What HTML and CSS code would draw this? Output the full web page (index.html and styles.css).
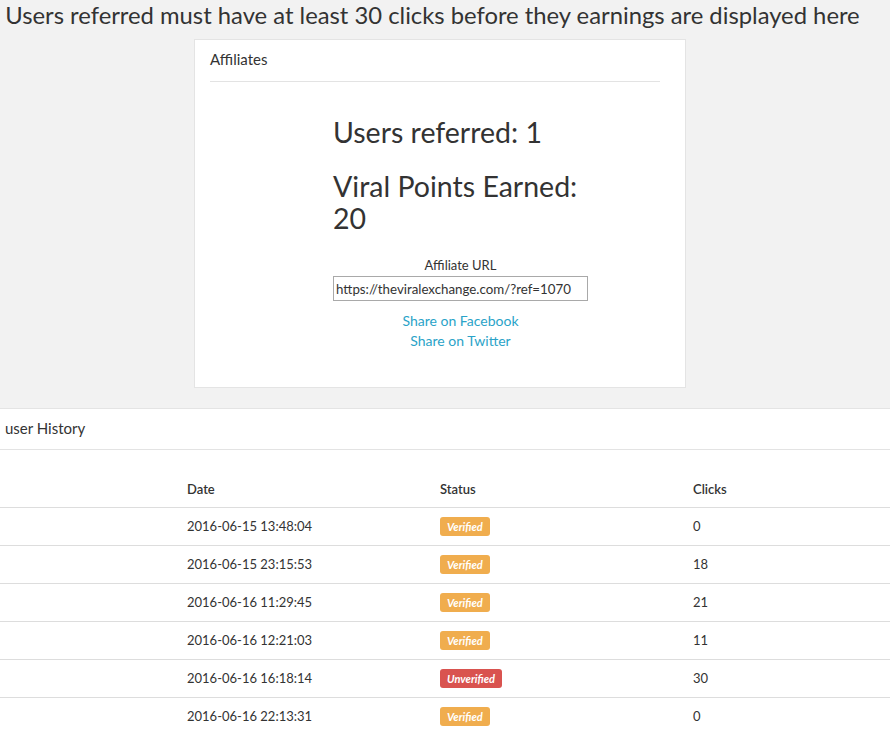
FILE: index.html
```html
<!DOCTYPE html>
<html lang="en">
<head>
  <meta charset="UTF-8" />
  <meta name="viewport" content="width=device-width, initial-scale=1.0" />
  <title>Affiliates</title>
  <link rel="stylesheet" href="styles.css">
</head>
<body>
  <h1 class="notice">Users referred must have at least 30 clicks before they earnings are displayed here</h1>

  <div class="panel affiliates">
    <div class="panel-heading">Affiliates</div>
    <div class="panel-body">
      <div class="stats">
        <h3>Users referred: 1</h3>
        <h3>Viral Points Earned: 20</h3>
        <div class="share">
          <label for="refUrl">Affiliate URL</label>
          <input type="text" id="refUrl" value="https://theviralexchange.com/?ref=1070" />
          <a href="#">Share on Facebook</a>
          <a href="#">Share on Twitter</a>
        </div>
      </div>
    </div>
  </div>

  <div class="panel history">
    <div class="panel-heading">user History</div>
    <table class="history-table">
      <thead>
        <tr>
          <th class="spacer"></th>
          <th class="col">Date</th>
          <th class="col">Status</th>
          <th>Clicks</th>
        </tr>
      </thead>
      <tbody>
        <tr><td></td><td>2016-06-15 13:48:04</td><td><span class="badge verified">Verified</span></td><td>0</td></tr>
        <tr><td></td><td>2016-06-15 23:15:53</td><td><span class="badge verified">Verified</span></td><td>18</td></tr>
        <tr><td></td><td>2016-06-16 11:29:45</td><td><span class="badge verified">Verified</span></td><td>21</td></tr>
        <tr><td></td><td>2016-06-16 12:21:03</td><td><span class="badge verified">Verified</span></td><td>11</td></tr>
        <tr><td></td><td>2016-06-16 16:18:14</td><td><span class="badge unverified">Unverified</span></td><td>30</td></tr>
        <tr><td></td><td>2016-06-16 22:13:31</td><td><span class="badge verified">Verified</span></td><td>0</td></tr>
      </tbody>
    </table>
  </div>
</body>
</html>
```

FILE: styles.css
```css
body {
  margin: 0;
  background: #f2f2f2;
  font-family: Lato, "Open Sans", sans-serif;
  color: #333;
}
.notice {
  margin: 0;
  font-size: 23.8px;
  font-weight: normal;
  line-height: 30px;
  text-align: center;
  padding-right: 25px;
  white-space: nowrap;
}
.panel {
  background: #fff;
  border: 1px solid #e4e4e4;
  box-sizing: border-box;
}
.affiliates {
  width: 492px;
  margin: 9px 0 0 194px;
}
.affiliates .panel-heading {
  margin: 0 25px 0 15px;
  padding: 9px 0 11px;
  font-size: 15px;
  line-height: 21px;
  border-bottom: 1px solid #e3e3e3;
}
.affiliates .panel-body {
  padding: 34px 0 36px 138px;
}
.stats {
  width: 255px;
}
.stats h3 {
  margin: 0 0 22px;
  font-size: 28.5px;
  font-weight: normal;
  line-height: 32px;
}
.share {
  display: flex;
  flex-direction: column;
  align-items: center;
  font-size: 13px;
}
.share label {
  line-height: 18px;
  margin-bottom: 2px;
}
.share input {
  width: 100%;
  box-sizing: border-box;
  height: 25px;
  padding: 2px 2px;
  border: 1px solid #a9a9a9;
  font-family: inherit;
  font-size: 13.3px;
  color: #333;
  margin-bottom: 10px;
}
.share a {
  color: #2aa3c8;
  text-decoration: none;
  font-size: 14px;
  line-height: 20px;
}
.history {
  margin-top: 20px;
  padding-bottom: 24px;
  border-left: none;
  border-right: none;
}
.history .panel-heading {
  padding: 9px 5px 10px;
  font-size: 15px;
  line-height: 21px;
  border-bottom: 1px solid #e3e3e3;
}
.history-table {
  width: 100%;
  margin-top: 21px;
  border-collapse: collapse;
  font-size: 13px;
}
.history-table th {
  text-align: left;
  font-weight: 600;
  padding: 8px;
  line-height: 20px;
  border-bottom: 1px solid #ddd;
}
.history-table th.spacer {
  width: 163px;
}
.history-table th.col {
  width: 237px;
}
.history-table td {
  padding: 8px;
  line-height: 21px;
  border-bottom: 1px solid #ddd;
  vertical-align: top;
}
.history-table tbody tr:last-child td {
  border-bottom: none;
}
.badge {
  display: inline-block;
  margin-top: 1px;
  padding: 3px 7px;
  border-radius: 3px;
  color: #fff;
  font-size: 11px;
  font-weight: bold;
  font-style: italic;
  line-height: 13px;
  vertical-align: top;
}
.verified {
  background: #f0ad4e;
}
.unverified {
  background: #d9534f;
}
```
